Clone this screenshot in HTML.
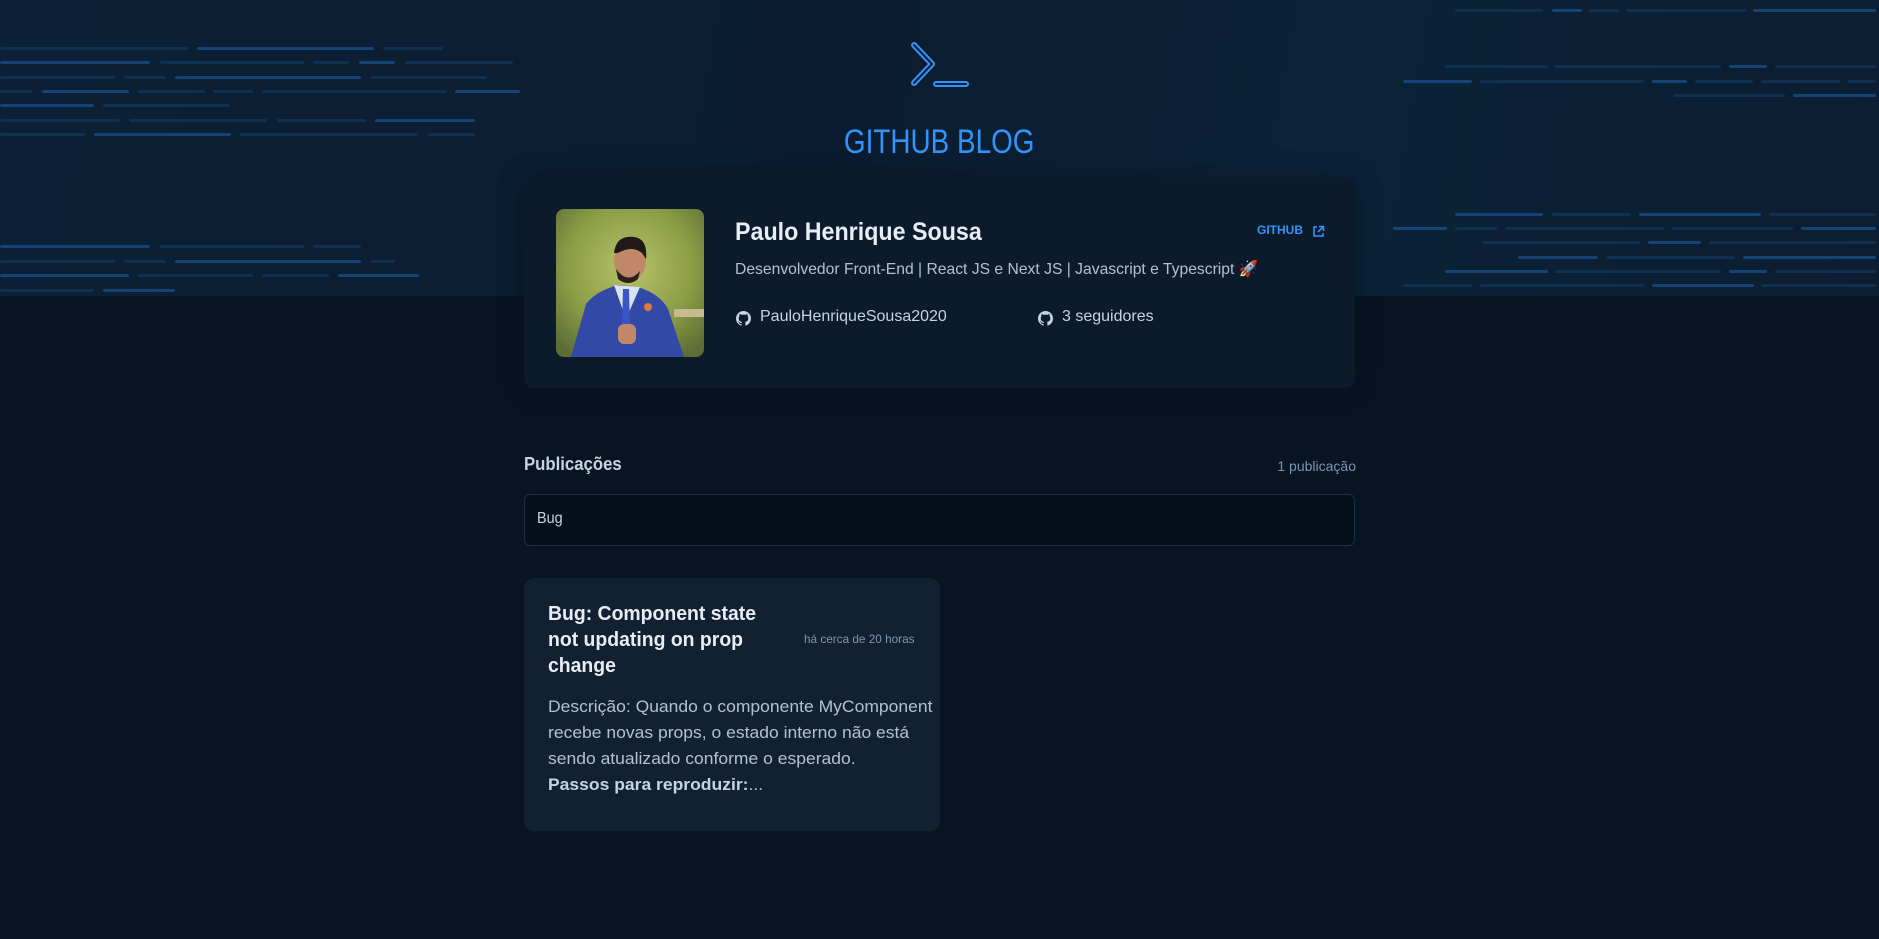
<!DOCTYPE html>
<html><head><meta charset="utf-8"><style>
*{margin:0;padding:0;box-sizing:border-box}
body{width:1879px;height:939px;background:#071422;font-family:"Liberation Sans",sans-serif;position:relative;overflow:hidden}
.hdr{position:absolute;left:0;top:0;width:1879px;height:296px;background:linear-gradient(100deg,#0b2036 0%,#0b1c30 45%,#0b2238 70%,#0b1d31 100%)}
.l{position:absolute;height:3px;border-radius:2px;background:#10304f}
.b{background:#154376}
.t{position:absolute;white-space:nowrap}
.card{position:absolute;left:524px;top:177px;width:831px;height:211px;background:#0b1b2b;border-radius:10px;box-shadow:0 2px 28px rgba(0,0,0,.25)}
.nar{display:inline-block;transform-origin:left center}
</style></head><body>
<div class="hdr">
<div class="l" style="left:0;top:47px;width:188px"></div><div class="l b" style="left:197px;top:47px;width:177px"></div><div class="l" style="left:383px;top:47px;width:60px"></div>
<div class="l b" style="left:0;top:61px;width:150px"></div><div class="l" style="left:160px;top:61px;width:144px"></div><div class="l" style="left:313px;top:61px;width:36px"></div><div class="l b" style="left:359px;top:61px;width:36px"></div><div class="l" style="left:405px;top:61px;width:108px"></div>
<div class="l" style="left:0;top:76px;width:115px"></div><div class="l" style="left:124px;top:76px;width:42px"></div><div class="l b" style="left:175px;top:76px;width:186px"></div><div class="l" style="left:371px;top:76px;width:116px"></div>
<div class="l" style="left:0;top:90px;width:32px"></div><div class="l b" style="left:42px;top:90px;width:87px"></div><div class="l" style="left:138px;top:90px;width:67px"></div><div class="l" style="left:213px;top:90px;width:40px"></div><div class="l" style="left:262px;top:90px;width:185px"></div><div class="l b" style="left:455px;top:90px;width:65px"></div>
<div class="l b" style="left:0;top:104px;width:94px"></div><div class="l" style="left:103px;top:104px;width:127px"></div>
<div class="l" style="left:0;top:119px;width:120px"></div><div class="l" style="left:129px;top:119px;width:138px"></div><div class="l" style="left:277px;top:119px;width:89px"></div><div class="l b" style="left:375px;top:119px;width:100px"></div>
<div class="l" style="left:0;top:133px;width:85px"></div><div class="l b" style="left:94px;top:133px;width:137px"></div><div class="l" style="left:240px;top:133px;width:178px"></div><div class="l" style="left:428px;top:133px;width:47px"></div>
<div class="l b" style="left:0;top:245px;width:150px"></div><div class="l" style="left:160px;top:245px;width:144px"></div><div class="l" style="left:313px;top:245px;width:48px"></div>
<div class="l" style="left:0;top:260px;width:115px"></div><div class="l" style="left:124px;top:260px;width:42px"></div><div class="l b" style="left:175px;top:260px;width:186px"></div><div class="l" style="left:371px;top:260px;width:24px"></div>
<div class="l b" style="left:0;top:274px;width:129px"></div><div class="l" style="left:138px;top:274px;width:115px"></div><div class="l" style="left:262px;top:274px;width:67px"></div><div class="l b" style="left:338px;top:274px;width:81px"></div>
<div class="l" style="left:0;top:289px;width:94px"></div><div class="l b" style="left:103px;top:289px;width:72px"></div>
<div class="l" style="left:1455px;top:9px;width:88px"></div><div class="l b" style="left:1552px;top:9px;width:30px"></div><div class="l" style="left:1589px;top:9px;width:30px"></div><div class="l" style="left:1626px;top:9px;width:120px"></div><div class="l b" style="left:1753px;top:9px;width:123px"></div>
<div class="l" style="left:1445px;top:65px;width:103px"></div><div class="l" style="left:1555px;top:65px;width:166px"></div><div class="l b" style="left:1729px;top:65px;width:38px"></div><div class="l" style="left:1775px;top:65px;width:101px"></div>
<div class="l b" style="left:1403px;top:80px;width:69px"></div><div class="l" style="left:1480px;top:80px;width:164px"></div><div class="l b" style="left:1652px;top:80px;width:35px"></div><div class="l" style="left:1695px;top:80px;width:58px"></div><div class="l" style="left:1761px;top:80px;width:79px"></div><div class="l" style="left:1848px;top:80px;width:28px"></div>
<div class="l" style="left:1673px;top:94px;width:112px"></div><div class="l b" style="left:1793px;top:94px;width:83px"></div>
<div class="l b" style="left:1455px;top:213px;width:88px"></div><div class="l" style="left:1552px;top:213px;width:79px"></div><div class="l b" style="left:1639px;top:213px;width:122px"></div><div class="l" style="left:1769px;top:213px;width:107px"></div>
<div class="l b" style="left:1393px;top:227px;width:54px"></div><div class="l" style="left:1455px;top:227px;width:42px"></div><div class="l" style="left:1505px;top:227px;width:159px"></div><div class="l" style="left:1672px;top:227px;width:121px"></div><div class="l b" style="left:1801px;top:227px;width:75px"></div>
<div class="l" style="left:1483px;top:241px;width:157px"></div><div class="l b" style="left:1648px;top:241px;width:53px"></div><div class="l" style="left:1709px;top:241px;width:167px"></div>
<div class="l b" style="left:1518px;top:256px;width:80px"></div><div class="l" style="left:1606px;top:256px;width:129px"></div><div class="l b" style="left:1743px;top:256px;width:133px"></div>
<div class="l b" style="left:1445px;top:270px;width:103px"></div><div class="l" style="left:1555px;top:270px;width:166px"></div><div class="l b" style="left:1729px;top:270px;width:38px"></div><div class="l" style="left:1775px;top:270px;width:101px"></div>
<div class="l" style="left:1403px;top:284px;width:69px"></div><div class="l" style="left:1480px;top:284px;width:164px"></div><div class="l b" style="left:1652px;top:284px;width:102px"></div><div class="l" style="left:1761px;top:284px;width:115px"></div>
<svg style="position:absolute;left:900px;top:35px" width="80" height="60" viewBox="900 35 80 60">
<g fill="none" stroke-linecap="round" stroke-linejoin="round">
<path d="M914 45 L932 64 L914 83 M936 84 H966" stroke="#3294f8" stroke-width="6"/>
<path d="M914 45 L932 64 L914 83 M936 84 H966" stroke="#0b2036" stroke-width="2"/>
</g></svg>
<div class="t" style="left:0;width:1879px;text-align:center;top:123px;font-size:34px;color:#3294f8;"><span class="nar" style="transform:scaleX(.82);transform-origin:center">GITHUB BLOG</span></div>
</div>
<div class="card">
<svg style="position:absolute;left:32px;top:32px;border-radius:8px" width="148" height="148" viewBox="0 0 148 148">
<defs><radialGradient id="g" cx=".5" cy=".4" r=".7"><stop offset="0" stop-color="#b7c36a"/><stop offset=".6" stop-color="#8c9d46"/><stop offset="1" stop-color="#5d6e35"/></radialGradient></defs>
<rect width="148" height="148" fill="url(#g)"/>
<rect x="118" y="100" width="30" height="8" fill="#c9b990"/>
<path d="M15 148 L30 95 Q40 82 62 76 L82 78 Q104 85 112 100 L128 148 Z" fill="#3249a8"/>
<path d="M58 76 L70 110 L84 78 Z" fill="#dce3f0"/>
<path d="M67 80 L73 80 L74 118 L70 124 L66 118 Z" fill="#3a55c8"/>
<ellipse cx="74" cy="52" rx="16" ry="20" fill="#c08868"/>
<path d="M58 44 Q60 26 78 28 Q92 30 90 50 L86 44 Q76 36 62 44 Z" fill="#1f1a18"/>
<path d="M60 60 Q72 76 84 62 L82 70 Q72 78 62 70 Z" fill="#2a201c"/>
<rect x="62" y="115" width="18" height="20" rx="6" fill="#c08868"/>
<circle cx="92" cy="98" r="4" fill="#e07a30"/>
</svg>
<div class="t" style="left:211px;top:41px;font-size:25px;font-weight:bold;color:#e7edf4"><span class="nar" style="transform:scaleX(.93)">Paulo Henrique Sousa</span></div>
<div class="t" style="left:733px;top:46px;font-size:12px;font-weight:bold;color:#3294f8">GITHUB</div>
<svg style="position:absolute;left:788px;top:48px" width="13" height="13" viewBox="0 0 13 13" fill="none" stroke="#3294f8" stroke-width="1.6"><path d="M5 2H2V11H11V8M7 1.5H11.5V6M11.5 1.5L6 7"/></svg>
<div class="t" style="left:211px;top:82px;font-size:16px;color:#afc2d4"><span class="nar" style="transform:scaleX(.98)">Desenvolvedor Front-End | React JS e Next JS | Javascript e Typescript 🚀</span></div>
<svg style="position:absolute;left:212px;top:134px" width="15" height="15" viewBox="0 0 16 16"><path d="M8 0C3.58 0 0 3.58 0 8c0 3.54 2.290 6.53 5.47 7.59.4.07.55-.17.55-.38v-1.34c-2.23.49-2.7-1.07-2.7-1.07-.36-.93-.89-1.170-.89-1.17-.73-.5.06-.49.06-.49.8.06 1.23.83 1.23.83.72 1.23 1.88.87 2.34.67.07-.52.28-.87.51-1.07-1.78-.2-3.640-.89-3.64-3.95 0-.87.31-1.59.82-2.15-.08-.2-.36-1.02.08-2.12 0 0 .67-.21 2.2.82a7.6 7.6 0 014 0c1.53-1.04 2.2-.82 2.2-.82.44 1.1.16 1.92.08 2.12.51.56.82 1.27.82 2.15 0 3.07-1.87 3.75-3.65 3.95.29.25.54.73.54 1.48v2.2c0 .21.15.46.55.38A8 8 0 0016 8c0-4.42-3.58-8-8-8z" fill="#c4d4e3"/></svg>
<div class="t" style="left:236px;top:131px;font-size:16px;color:#c4d4e3">PauloHenriqueSousa2020</div>
<svg style="position:absolute;left:514px;top:134px" width="15" height="15" viewBox="0 0 16 16"><path d="M8 0C3.58 0 0 3.58 0 8c0 3.54 2.29 6.53 5.47 7.59.4.07.55-.17.55-.38v-1.34c-2.23.49-2.7-1.07-2.7-1.07-.36-.93-.89-1.17-.89-1.17-.73-.5.06-.49.06-.49.8.06 1.23.83 1.23.83.72 1.23 1.88.87 2.34.67.07-.52.28-.87.51-1.07-1.78-.2-3.64-.89-3.64-3.95 0-.87.31-1.59.82-2.15-.08-.2-.36-1.02.08-2.12 0 0 .67-.21 2.2.82a7.6 7.6 0 014 0c1.53-1.04 2.2-.82 2.2-.82.44 1.1.16 1.92.08 2.12.51.56.82 1.27.82 2.15 0 3.07-1.87 3.75-3.65 3.95.29.25.54.73.54 1.48v2.2c0 .21.15.46.55.38A8 8 0 0016 8c0-4.42-3.58-8-8-8z" fill="#c4d4e3"/></svg>
<div class="t" style="left:538px;top:131px;font-size:16px;color:#c4d4e3">3 seguidores</div>
</div>
<div class="t" style="left:524px;top:454px;font-size:18px;font-weight:bold;color:#c4d4e3"><span class="nar" style="transform:scaleX(.93)">Publicações</span></div>
<div class="t" style="right:523px;top:458px;font-size:14px;color:#7b96b2">1 publicação</div>
<div style="position:absolute;left:524px;top:494px;width:831px;height:52px;background:#040f1a;border:1px solid #1c2f41;border-radius:6px"></div>
<div class="t" style="left:537px;top:510px;font-size:16px;color:#c4d4e3"><span class="nar" style="transform:scaleX(.9)">Bug</span></div>
<div style="position:absolute;left:524px;top:578px;width:416px;height:253px;background:#112131;border-radius:10px"></div>
<div class="t" style="left:548px;top:601px;font-size:20px;font-weight:bold;color:#e7edf4;line-height:26px"><span class="nar" style="transform:scaleX(.97)">Bug: Component state<br>not updating on prop<br>change</span></div>
<div class="t" style="left:804px;top:632px;font-size:12px;color:#7b96b2"><span class="nar" style="transform:scaleX(.98)">há cerca de 20 horas</span></div>
<div class="t" style="left:548px;top:694px;font-size:17px;color:#afc2d4;line-height:26px"><span class="nar" style="transform:scaleX(1.03)">Descrição: Quando o componente MyComponent<br>recebe novas props, o estado interno não está<br>sendo atualizado conforme o esperado.<br><b style="color:#c4d4e3">Passos para reproduzir:</b>...</span></div>
</body></html>
